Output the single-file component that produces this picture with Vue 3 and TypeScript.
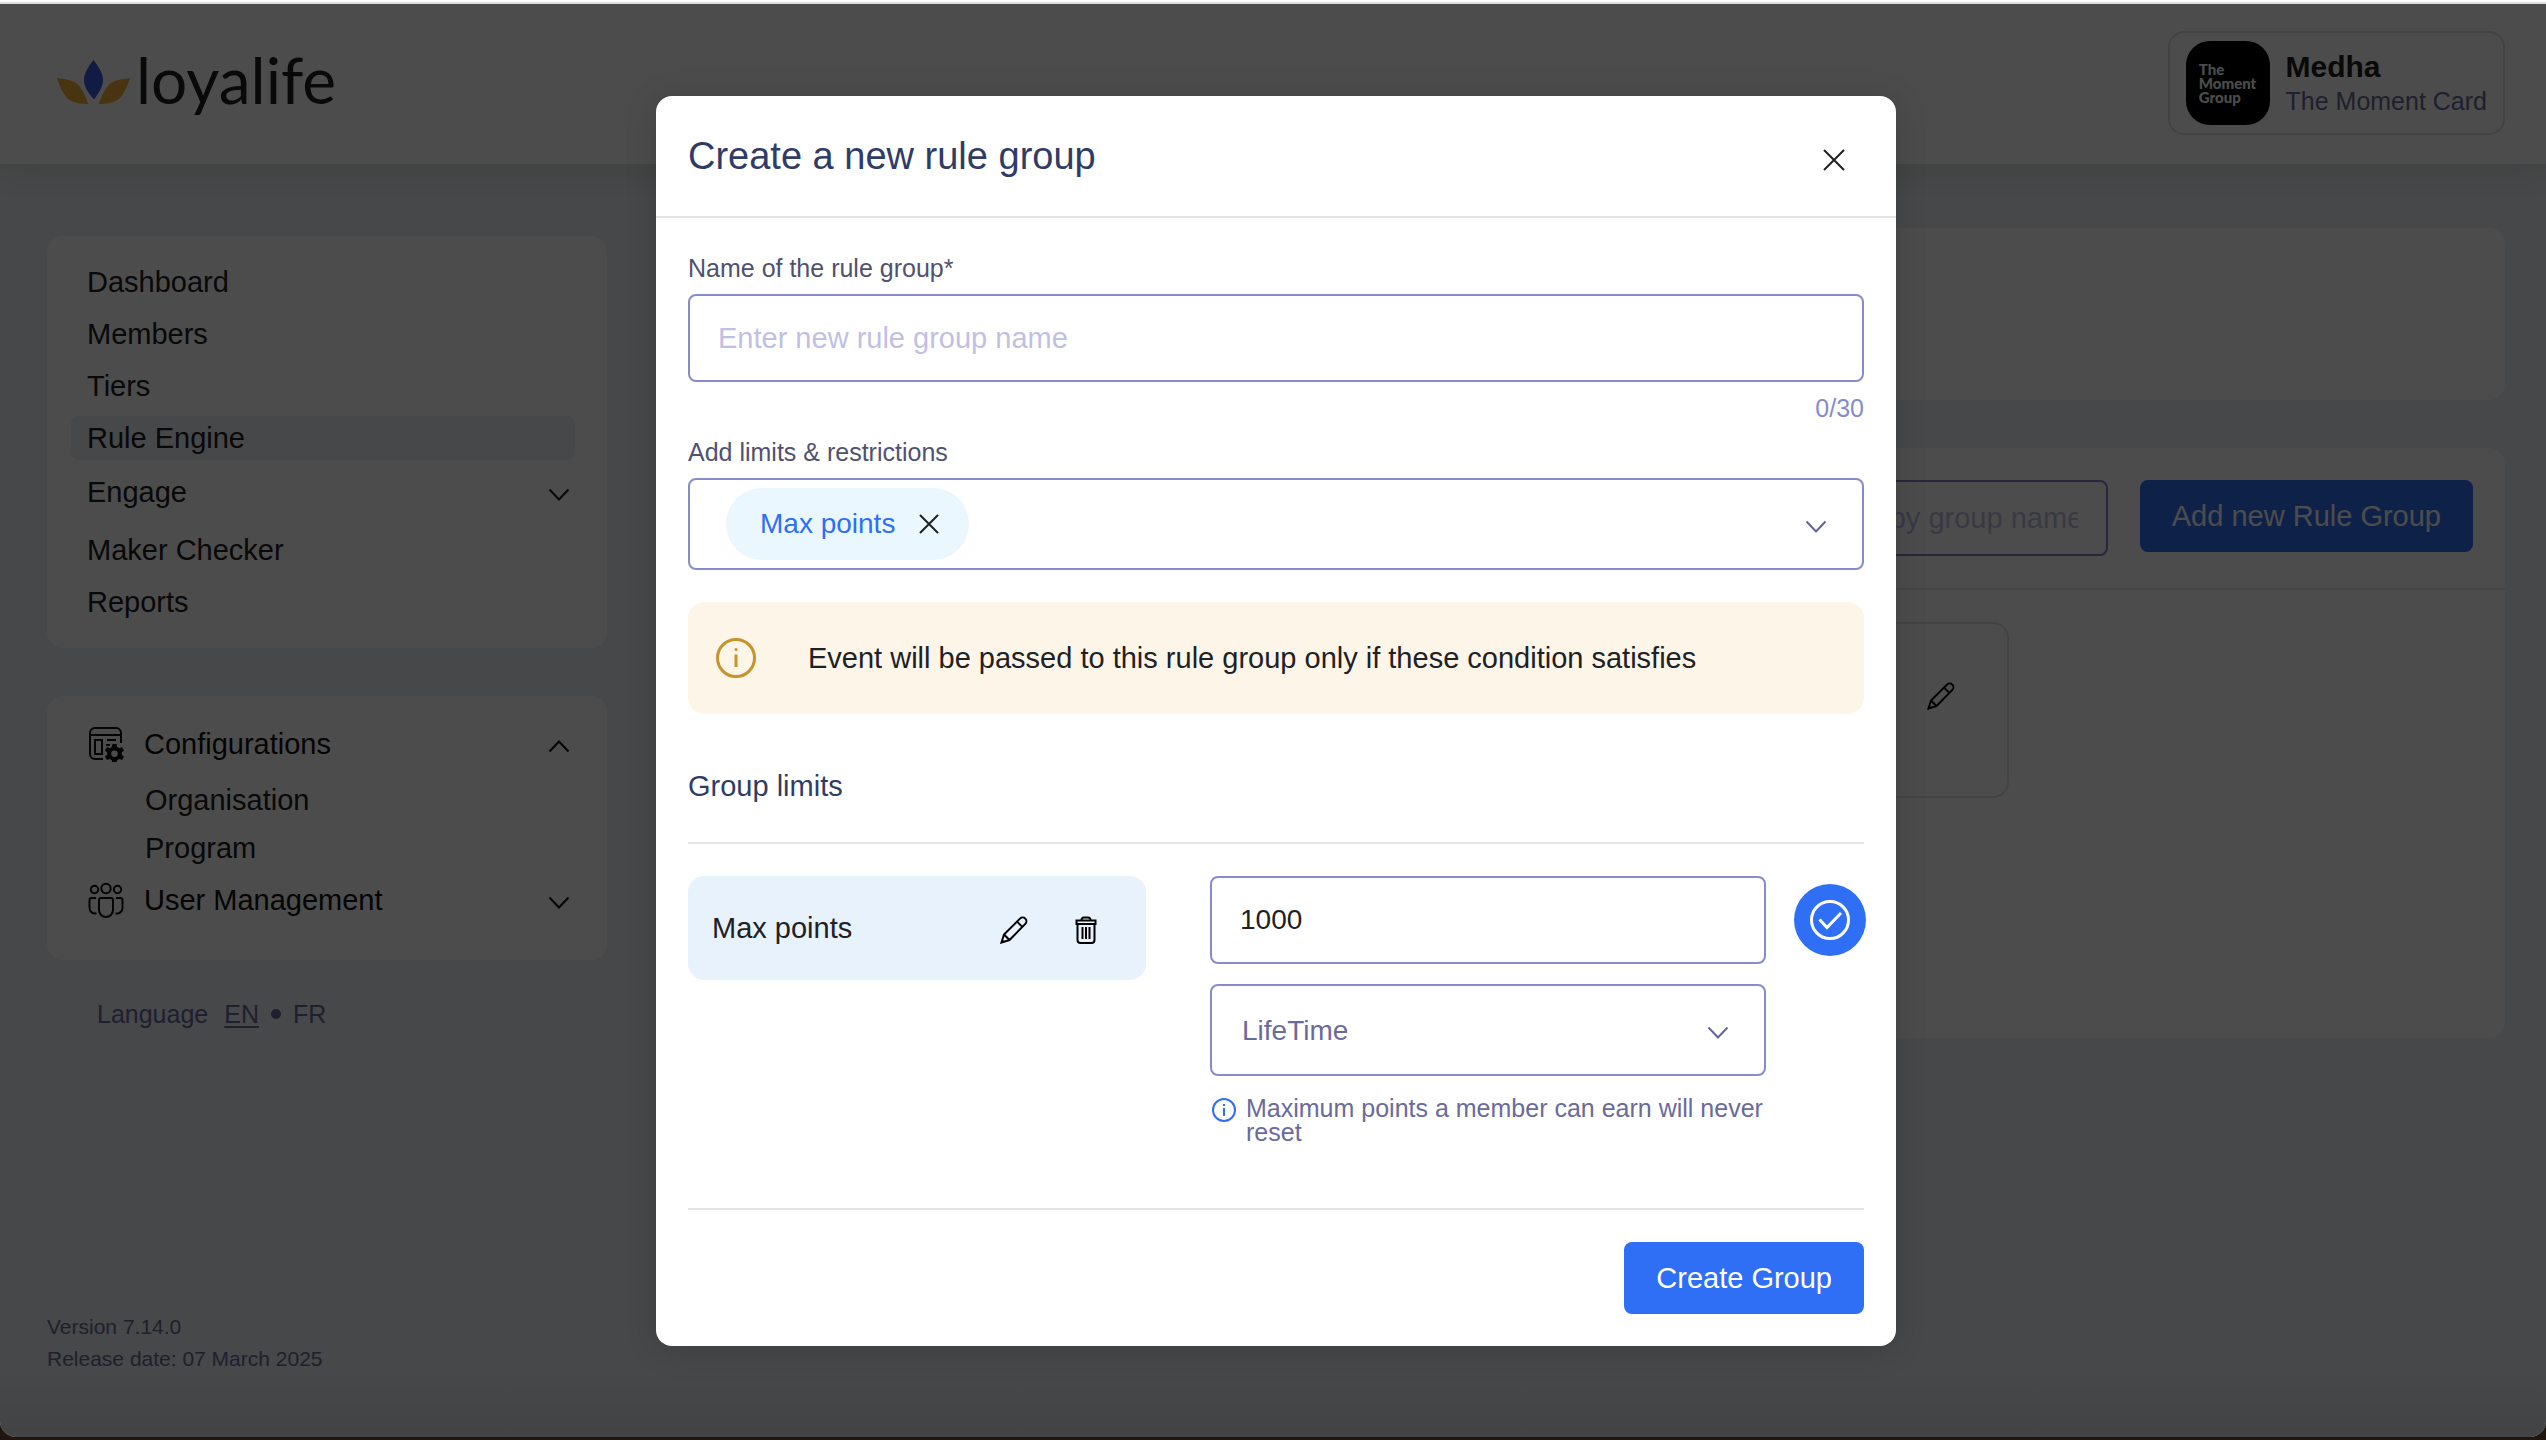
<script setup lang="ts">
import { ref } from 'vue'

interface MenuItem {
  label: string
  active?: boolean
  expandable?: boolean
}

const menu: MenuItem[] = [
  { label: 'Dashboard' },
  { label: 'Members' },
  { label: 'Tiers' },
  { label: 'Rule Engine', active: true },
  { label: 'Engage', expandable: true },
  { label: 'Maker Checker' },
  { label: 'Reports' },
]

const groupName = ref('')
const search = ref('')
const maxPoints = ref('1000')
const period = ref('LifeTime')
const limit = ref('')
</script>

<template>
  <div class="screen">
    <div class="window">
      <header class="topbar">
        <a class="logo" href="#">
          <svg class="logo-mark" viewBox="0 0 73 48" aria-hidden="true">
            <path fill="#3a5be0" d="M36.500 4C40 9 46 16 46 24S40 39 37 43.500C33 39 27 32 27 24S33 9 36.500 4Z" />
            <path fill="#f3b03c" d="M0 22C8 23 16 24 21 28.500C26 34 29 41 31 48C24 48 16 47 11 43C6 38 2 29 0 22Z" />
            <path fill="#f3b03c" d="M73 22C65 23 57 24 52 28.500C47 34 44 41 42 48C49 48 57 47 62 43C67 38 71 29 73 22Z" />
          </svg>
          <span class="logo-text">loyalife</span>
        </a>
        <div class="profile">
          <div class="avatar"><span>The<br />Moment<br />Group</span></div>
          <div>
            <div class="profile-name">Medha</div>
            <div class="profile-program">The Moment Card</div>
          </div>
        </div>
      </header>

      <div class="page">
        <aside class="sidebar">
          <nav class="card menu">
            <a
              v-for="item in menu"
              :key="item.label"
              href="#"
              class="menu-item"
              :class="{ active: item.active, expandable: item.expandable }"
            >
              {{ item.label }}
              <svg v-if="item.expandable" class="chevron" viewBox="0 0 22 18" aria-hidden="true">
                <path d="M1.500 6.500l9.500 10L20.500 6.500" />
              </svg>
            </a>
          </nav>

          <nav class="card config">
            <a href="#" class="section">
              <svg class="section-icon" viewBox="0 0 36 36" aria-hidden="true">
                <path d="M15 33H7a5 5 0 0 1-5-5V7a5 5 0 0 1 5-5h21a5 5 0 0 1 5 5v10M2 9h31" />
                <path d="M7 14h7v14H7zM19 14h9M18 19h4" />
                <path
                  fill="currentColor"
                  stroke="none"
                  fill-rule="evenodd"
                  d="M24.500 18h4l.7 3 2 1.200 2.800-1.200 2 3.500-2.200 2v2.200l2.200 2-2 3.300-2.800-1-2 1.200-.7 2.800h-4l-.7-2.800-2-1.200-2.800 1-2-3.300 2.200-2v-2.200l-2.200-2 2-3.500 2.800 1.200 2-1.200zM26.500 24.500a3.200 3.200 0 1 0 0 6.400a3.200 3.200 0 1 0 0-6.400z"
                />
              </svg>
              <span class="section-label">Configurations</span>
              <svg class="chevron" viewBox="0 0 22 18" aria-hidden="true"><path d="M1.500 16.500L11 6.500l9.500 10" /></svg>
            </a>
            <a href="#" class="sub-item">Organisation</a>
            <a href="#" class="sub-item">Program</a>
            <a href="#" class="section last">
              <svg class="section-icon" viewBox="0 0 36 36" aria-hidden="true">
                <circle cx="18" cy="6.500" r="4.700" />
                <circle cx="6.500" cy="7.500" r="3.700" />
                <circle cx="29.500" cy="7.500" r="3.700" />
                <path d="M11 18a2 2 0 0 1 2-2h10a2 2 0 0 1 2 2v10a7 7 0 0 1-14 0z" />
                <path d="M8 16H3.500a2 2 0 0 0-2 2V26a5.500 5.500 0 0 0 7 5.300M28 16h4.500a2 2 0 0 1 2 2V26a5.500 5.500 0 0 1-7 5.300" />
              </svg>
              <span class="section-label">User Management</span>
              <svg class="chevron" viewBox="0 0 22 18" aria-hidden="true"><path d="M1.500 6.500l9.500 10L20.500 6.500" /></svg>
            </a>
          </nav>

          <div class="language">
            <span class="language-label">Language</span>
            <a href="#" class="current">EN</a>
            <span class="dot"></span>
            <a href="#">FR</a>
          </div>

          <footer class="version">
            <div>Version 7.14.0</div>
            <div>Release date: 07 March 2025</div>
          </footer>
        </aside>

        <main class="content">
          <section class="card summary"></section>
          <section class="card groups">
            <div class="toolbar">
              <input v-model="search" class="search" type="text" aria-label="Search" placeholder="Search by group name" />
              <button type="button" class="btn">Add new Rule Group</button>
            </div>
            <div class="group-list">
              <div class="group">
                <button type="button" class="icon-btn" aria-label="Edit group">
                  <svg class="glyph" viewBox="0 0 28 28" aria-hidden="true">
                    <path d="M1.500 26.500L4 18.500L20 2.600a3.700 3.700 0 0 1 5.300 5.300L9.500 24ZM4 18.500l5.500 5.500M17 5.600l5.300 5.300" />
                    <path class="solid" d="M0.500 27.500l1.500-4.500 3 3z" />
                  </svg>
                </button>
              </div>
            </div>
          </section>
        </main>
      </div>

      <div class="backdrop">
        <form class="modal" role="dialog" aria-labelledby="modal-title" @submit.prevent>
          <div class="modal-head">
            <h1 id="modal-title">Create a new rule group</h1>
            <button type="button" class="close" aria-label="Close">
              <svg viewBox="0 0 22 22" aria-hidden="true"><path d="M1 1l20 20M21 1L1 21" /></svg>
            </button>
          </div>

          <div class="modal-body">
            <label class="label" for="group-name">Name of the rule group*</label>
            <input
              id="group-name"
              v-model="groupName"
              class="field"
              type="text"
              maxlength="30"
              placeholder="Enter new rule group name"
            />
            <div class="counter">{{ groupName.length }}/30</div>

            <label class="label" for="limits">Add limits &amp; restrictions</label>
            <div class="select-box">
              <span class="chip">
                Max points
                <button type="button" class="chip-remove" aria-label="Remove Max points">
                  <svg viewBox="0 0 20 20" aria-hidden="true"><path d="M1 1l18 18M19 1L1 19" /></svg>
                </button>
              </span>
              <select id="limits" v-model="limit" class="select">
                <option value=""></option>
              </select>
              <svg class="chevron accent" viewBox="0 0 22 18" aria-hidden="true"><path d="M1.500 6.500l9.500 10L20.500 6.500" /></svg>
            </div>

            <div class="notice">
              <svg class="notice-icon" viewBox="0 0 40 40" aria-hidden="true">
                <circle cx="20" cy="20" r="18.500" />
                <path d="M20 16.500v12.500" />
                <circle class="solid" cx="20" cy="11.500" r="1.500" />
              </svg>
              <span>Event will be passed to this rule group only if these condition satisfies</span>
            </div>

            <h2>Group limits</h2>

            <div class="limit-row">
              <div class="limit-item">
                <span class="limit-name">Max points</span>
                <button type="button" class="icon-btn" aria-label="Edit Max points">
                  <svg class="glyph" viewBox="0 0 28 28" aria-hidden="true">
                    <path d="M1.500 26.500L4 18.500L20 2.600a3.700 3.700 0 0 1 5.300 5.300L9.500 24ZM4 18.500l5.500 5.500M17 5.600l5.300 5.300" />
                    <path class="solid" d="M0.500 27.500l1.500-4.500 3 3z" />
                  </svg>
                </button>
                <button type="button" class="icon-btn" aria-label="Delete Max points">
                  <svg class="glyph" viewBox="0 0 28 28" aria-hidden="true">
                    <path d="M4.500 4.500h19v3.500h-19zM9.500 4.500a2.500 2.500 0 0 1 2.500-3h4a2.500 2.500 0 0 1 2.500 3" />
                    <path d="M5.500 8v16a3 3 0 0 0 3 3h11a3 3 0 0 0 3-3V8M10.500 11v12M14 11v12M17.500 11v12" />
                  </svg>
                </button>
              </div>

              <div class="limit-fields">
                <input v-model="maxPoints" class="field value" type="text" aria-label="Maximum points" />
                <div class="select-box">
                  <select v-model="period" class="select period" aria-label="Period">
                    <option>LifeTime</option>
                  </select>
                  <svg class="chevron accent" viewBox="0 0 22 18" aria-hidden="true"><path d="M1.500 6.500l9.500 10L20.500 6.500" /></svg>
                </div>
                <div class="hint">
                  <svg class="hint-icon" viewBox="0 0 24 24" aria-hidden="true">
                    <circle cx="12" cy="12" r="11" />
                    <path d="M12 10v8M12 6v2" />
                  </svg>
                  <span>Maximum points a member can earn will never reset</span>
                </div>
              </div>

              <button type="button" class="confirm" aria-label="Save limit">
                <svg viewBox="0 0 40 40" aria-hidden="true">
                  <circle cx="20" cy="20" r="18.500" />
                  <path d="M9.500 19.500l7.500 8L31 13" />
                </svg>
              </button>
            </div>

            <div class="modal-foot">
              <button type="submit" class="btn">Create Group</button>
            </div>
          </div>
        </form>
      </div>
    </div>
  </div>
</template>

<style>
body {
  margin: 0;
}
</style>

<style scoped>
* {
  box-sizing: border-box;
}

.screen {
  min-height: 100vh;
  display: flex;
  flex-direction: column;
  border-top: 2px solid #ffffff;
  padding-bottom: 3px;
  background: #21160f;
  font-family: 'Liberation Sans', Arial, sans-serif;
  font-size: 29px;
  color: #202124;
}

.window {
  position: relative;
  flex: 1;
  display: flex;
  flex-direction: column;
  border-top: 2px solid #dddddd;
  border-radius: 0 0 16px 16px;
  overflow: hidden;
  background: #edf0f3;
}

button,
input,
select {
  font: inherit;
  color: inherit;
}

button {
  border: 0;
  padding: 0;
  background: none;
  cursor: pointer;
}

a {
  color: inherit;
  text-decoration: none;
}

svg {
  display: block;
  flex: none;
  fill: none;
  stroke: currentColor;
  stroke-width: 2;
}

.solid {
  fill: currentColor;
  stroke: none;
}

.topbar {
  display: flex;
  align-items: center;
  justify-content: space-between;
  height: 160px;
  padding: 0 41px 2px 57px;
  background: #ffffff;
  box-shadow: 0 4px 32px rgba(20, 40, 20, 0.12);
}

.logo {
  display: flex;
  align-items: center;
  gap: 6px;
  padding-bottom: 6px;
}

.logo-mark {
  width: 73px;
  height: 48px;
  stroke: none;
}

.logo-text {
  font-family: Lato, sans-serif;
  font-size: 64px;
  line-height: 72px;
}

.profile {
  display: flex;
  align-items: center;
  gap: 16px;
  padding: 8px 16px;
  border: 2px solid #e0e0ec;
  border-radius: 16px;
}

.avatar {
  display: flex;
  align-items: center;
  justify-content: center;
  width: 84px;
  height: 84px;
  border-radius: 24px;
  background: #000000;
  color: #ffffff;
  font-family: Lato, sans-serif;
  font-size: 15px;
  font-weight: 900;
  line-height: 14px;
}

.profile-name {
  font-size: 30px;
  font-weight: 700;
  line-height: 36px;
}

.profile-program {
  font-size: 25px;
  line-height: 32px;
  color: #6a6a9c;
}

.page {
  flex: 1;
  display: flex;
  gap: 50px;
  padding: 64px 41px 62px 47px;
}

.card {
  border-radius: 16px;
  background: #ffffff;
}

.sidebar {
  display: flex;
  flex-direction: column;
  width: 560px;
  flex: none;
  padding-top: 8px;
}

.menu {
  display: flex;
  flex-direction: column;
  gap: 8px;
  padding: 24px 32px 24px 24px;
}

.menu-item {
  display: flex;
  align-items: center;
  justify-content: space-between;
  height: 44px;
  padding: 0 5px 0 16px;
  border-radius: 8px;
}

.menu-item.active {
  background: #edf0f3;
}

.menu-item.expandable {
  height: 48px;
  margin-bottom: 4px;
}

.chevron {
  width: 22px;
  height: 18px;
}

.accent {
  color: #65659a;
}

.config {
  display: flex;
  flex-direction: column;
  margin-top: 48px;
  padding: 24px 37px 36px 41px;
}

.section {
  display: flex;
  align-items: center;
  gap: 20px;
  height: 48px;
  margin-bottom: 8px;
  color: #101010;
}

.section.last {
  margin: 4px 0 0;
}

.section-icon {
  width: 36px;
  height: 36px;
}

.section-label {
  flex: 1;
}

.sub-item {
  padding-left: 57px;
  line-height: 48px;
}

.language {
  display: flex;
  align-items: center;
  gap: 12px;
  margin-top: 36px;
  padding-left: 50px;
  font-size: 25px;
  line-height: 36px;
  color: #6a6a9c;
}

.language-label {
  margin-right: 4px;
}

.current {
  text-decoration: underline 2px;
  text-underline-offset: 3px;
}

.dot {
  width: 10px;
  height: 10px;
  border-radius: 50%;
  background: currentColor;
}

.version {
  margin-top: auto;
  font-size: 21px;
  line-height: 32px;
  color: #6a6a9c;
}

.content {
  flex: 1;
  display: flex;
  flex-direction: column;
  gap: 48px;
}

.summary {
  height: 172px;
}

.groups {
  height: 590px;
}

.toolbar {
  display: flex;
  align-items: flex-start;
  justify-content: flex-end;
  gap: 32px;
  padding: 32px;
  border-bottom: 2px solid #e3e3e3;
}

.search {
  width: 348px;
  height: 76px;
  padding: 0 28px;
  border: 2px solid #8488c8;
  border-radius: 8px;
  background: transparent;
}

.search::placeholder,
.field::placeholder {
  color: #bfc0e4;
  opacity: 1;
}

.btn {
  height: 72px;
  padding: 0 32px;
  border-radius: 8px;
  background: #2e6ff6;
  color: #ffffff;
}

.group-list {
  padding: 32px;
}

.group {
  display: flex;
  align-items: center;
  justify-content: flex-end;
  width: 74%;
  height: 176px;
  padding: 0 52px 32px;
  border: 2px solid #e0e0ec;
  border-radius: 16px;
}

.icon-btn {
  padding-top: 4px;
  color: #000000;
}

.glyph {
  width: 28px;
  height: 28px;
}

.backdrop {
  position: absolute;
  inset: 0;
  display: flex;
  align-items: flex-start;
  justify-content: center;
  padding: 92px 0 0 6px;
  background:
    linear-gradient(to top, rgba(0, 0, 0, 0.07), rgba(0, 0, 0, 0) 68px),
    rgba(0, 0, 0, 0.7);
}

.modal {
  width: 90%;
  max-width: 1240px;
  border-radius: 16px;
  background: #ffffff;
  box-shadow: 0 4px 32px rgba(0, 0, 0, 0.15);
}

.modal-head {
  display: flex;
  align-items: flex-start;
  justify-content: space-between;
  padding: 34px 32px 26px;
  border-bottom: 2px solid #e4e4e4;
}

h1,
h2 {
  margin: 0;
  font-weight: 400;
  color: #2f3c66;
}

h1 {
  font-size: 38px;
  line-height: 52px;
}

.close {
  display: grid;
  place-items: center;
  width: 60px;
  height: 60px;
}

.close svg {
  width: 22px;
  height: 22px;
}

.modal-body {
  padding: 32px;
}

.label {
  display: block;
  margin-bottom: 8px;
  font-size: 25px;
  line-height: 36px;
  color: #51516f;
}

.field {
  display: block;
  width: 100%;
  height: 88px;
  padding: 0 28px;
  border: 2px solid #868bcb;
  border-radius: 8px;
  background: #ffffff;
}

.field:focus,
.select:focus {
  outline: none;
}

.value {
  font-size: 28px;
}

.counter {
  margin: 8px 0;
  font-size: 25px;
  line-height: 36px;
  text-align: right;
  color: #868bcb;
}

.select-box {
  display: flex;
  align-items: center;
  height: 92px;
  padding: 0 35px 0 30px;
  border: 2px solid #868bcb;
  border-radius: 8px;
}

.select {
  flex: 1;
  min-width: 0;
  height: 100%;
  padding: 0;
  border: 0;
  appearance: none;
  background: transparent;
}

.period {
  font-size: 28px;
  color: #6a6a9c;
}

.chip {
  display: flex;
  align-items: center;
  gap: 24px;
  height: 72px;
  margin-left: 6px;
  padding: 0 30px 0 34px;
  border-radius: 36px;
  background: #ebf7fe;
  font-size: 28px;
  color: #2e6ff6;
}

.chip-remove {
  color: #202124;
}

.chip-remove svg {
  width: 20px;
  height: 20px;
}

.notice {
  display: flex;
  align-items: center;
  gap: 52px;
  height: 112px;
  margin-top: 32px;
  padding: 0 28px;
  border-radius: 16px;
  background: #fdf6e8;
}

.notice-icon {
  width: 40px;
  height: 40px;
  color: #c7932c;
  stroke-width: 3;
}

h2 {
  margin-top: 54px;
  padding-bottom: 38px;
  border-bottom: 2px solid #e4e4e4;
  font-size: 29px;
  line-height: 36px;
}

.limit-row {
  display: grid;
  grid-template-columns: minmax(0, 522fr) minmax(0, 556fr) 98px;
  align-items: start;
  margin-top: 32px;
}

.limit-item {
  display: flex;
  align-items: center;
  gap: 44px;
  height: 104px;
  margin-right: 64px;
  padding: 0 46px 0 24px;
  border-radius: 16px;
  background: #e8f2fd;
}

.limit-name {
  flex: 1;
}

.limit-fields {
  display: flex;
  flex-direction: column;
  gap: 20px;
}

.hint {
  display: flex;
  gap: 10px;
  padding-left: 2px;
  font-size: 25px;
  line-height: 24px;
  color: #6a6a9c;
}

.hint-icon {
  width: 24px;
  height: 24px;
  margin-top: 2px;
  color: #2e6ff6;
}

.confirm {
  display: grid;
  place-items: center;
  width: 72px;
  height: 72px;
  margin: 8px 0 0 28px;
  border-radius: 50%;
  background: #2e6ff6;
  color: #ffffff;
}

.confirm svg {
  width: 40px;
  height: 40px;
  stroke-width: 3;
}

.modal-foot {
  display: flex;
  justify-content: flex-end;
  margin-top: 64px;
  padding-top: 32px;
  border-top: 2px solid #e4e4e4;
}
</style>
